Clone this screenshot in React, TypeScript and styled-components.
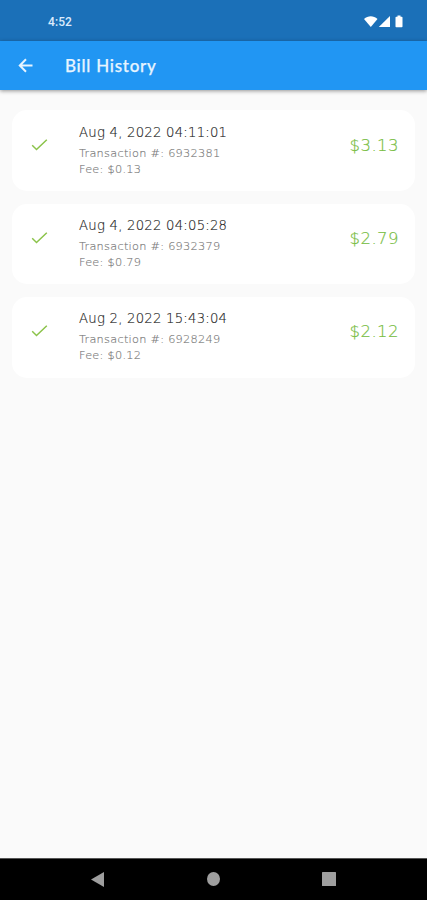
import React from "react";
import styled, { createGlobalStyle } from "styled-components";

const GlobalStyle = createGlobalStyle`
  * { box-sizing: border-box; }
  body { margin: 0; background: #fafafa; }
`;

const Screen = styled.div`
  display: flex;
  flex-direction: column;
  width: 100%;
  height: 900px;
  overflow: hidden;
  background: #fafafa;
  font-family: "DejaVu Sans", sans-serif;
`;

const StatusBar = styled.header`
  display: flex;
  align-items: center;
  justify-content: space-between;
  flex: 0 0 41px;
  padding: 2px 23px 0 48px;
  background: #1b70b8;
  color: #dcebfc;
`;

const Clock = styled.span`
  font: 500 12px/16px Roboto, sans-serif;
  letter-spacing: 0.1px;
`;

const AppBar = styled.div`
  display: flex;
  align-items: center;
  flex: 0 0 49px;
  padding: 0 0 0 18px;
  gap: 32px;
  background: #2196f3;
  color: #e6f4ff;
  box-shadow: 0 1px 4px rgba(0, 0, 0, 0.42);
`;

const Title = styled.h1`
  margin: 0;
  font: 500 17px/24px Lato, sans-serif;
  -webkit-text-stroke: 0.25px currentColor;
  letter-spacing: 0.75px;
`;

const BillList = styled.main`
  display: flex;
  flex-direction: column;
  flex: 1;
  gap: 12.7px;
  padding: 20.4px 12px 0;
`;

const BillCard = styled.article`
  display: flex;
  align-items: flex-start;
  height: 80.6px;
  padding: 13.3px 16px 0 19px;
  border-radius: 15px;
  background: #fff;
`;

const CheckIcon = styled.svg`
  flex: none;
  margin-top: 14px;
`;

const Details = styled.div`
  flex: 1;
  margin-left: 31px;
`;

const DateLine = styled.div`
  margin: -1px 0 4px;
  font-size: 13.2px;
  line-height: 19px;
  font-weight: 200;
  letter-spacing: 0.25px;
  color: #222;
  -webkit-text-stroke: 0.15px currentColor;
`;

const MetaLine = styled.div`
  font-size: 11.3px;
  line-height: 16px;
  font-weight: 200;
  letter-spacing: 0.27px;
  color: #777;
  -webkit-text-stroke: 0.15px currentColor;
`;

const Amount = styled.div`
  margin-top: 10px;
  font-size: 16.5px;
  line-height: 24px;
  font-weight: 200;
  letter-spacing: 0.45px;
  color: #78bd43;
  -webkit-text-stroke: 0.2px currentColor;
`;

const NavBar = styled.nav`
  display: flex;
  align-items: center;
  justify-content: space-between;
  flex: 0 0 42px;
  padding: 0 91px 1px;
  background: #000;
  color: #9e9e9e;
  border-top: 1px solid #555;
`;

const bills = [
  { date: "Aug 4, 2022 04:11:01", id: "6932381", fee: "$0.13", amount: "$3.13" },
  { date: "Aug 4, 2022 04:05:28", id: "6932379", fee: "$0.79", amount: "$2.79" },
  { date: "Aug 2, 2022 15:43:04", id: "6928249", fee: "$0.12", amount: "$2.12" },
];

export default function App() {
  return (
    <Screen>
      <GlobalStyle />
      <StatusBar>
        <Clock>4:52</Clock>
        <svg width="40" height="14" viewBox="0 0 40 14" fill="#fff">
          <path d="M0 4C4 .4 9.5 .4 13.5 4L6.8 12Z" />
          <path d="M26 1V12H14.8Z" />
          <path d="M33.5 .5h3v1.3h1.2q.8 0 .8.8v8.900q0 .8-.8.8h-5.4q-.8 0-.8-.8V2.600q0-.8.8-.8h1.200Z" />
        </svg>
      </StatusBar>
      <AppBar>
        <svg width="15" height="15" viewBox="0 0 15 15" fill="none" stroke="currentColor" strokeWidth="2">
          <path d="M14.500 7.500H2M8 1.300 1.800 7.500 8 13.700" />
        </svg>
        <Title>Bill History</Title>
      </AppBar>
      <BillList>
        {bills.map((bill) => (
          <BillCard key={bill.id}>
            <CheckIcon width="17" height="14" viewBox="0 0 17 14" fill="none" stroke="#8bc34a" strokeWidth="1.5">
              <path d="m1.200 7.300 4.300 4.200L15.800 1.700" />
            </CheckIcon>
            <Details>
              <DateLine>{bill.date}</DateLine>
              <MetaLine>Transaction #: {bill.id}</MetaLine>
              <MetaLine>Fee: {bill.fee}</MetaLine>
            </Details>
            <Amount>{bill.amount}</Amount>
          </BillCard>
        ))}
      </BillList>
      <NavBar>
        <svg width="13" height="15" viewBox="0 0 13 15" fill="currentColor">
          <path d="M13 0V15L0 7.500Z" />
        </svg>
        <svg width="13" height="14" viewBox="0 0 13 14" fill="currentColor">
          <ellipse cx="6.500" cy="7" rx="6.500" ry="7" />
        </svg>
        <svg width="14" height="14" viewBox="0 0 14 14" fill="currentColor">
          <rect width="14" height="14" rx=".5" />
        </svg>
      </NavBar>
    </Screen>
  );
}
